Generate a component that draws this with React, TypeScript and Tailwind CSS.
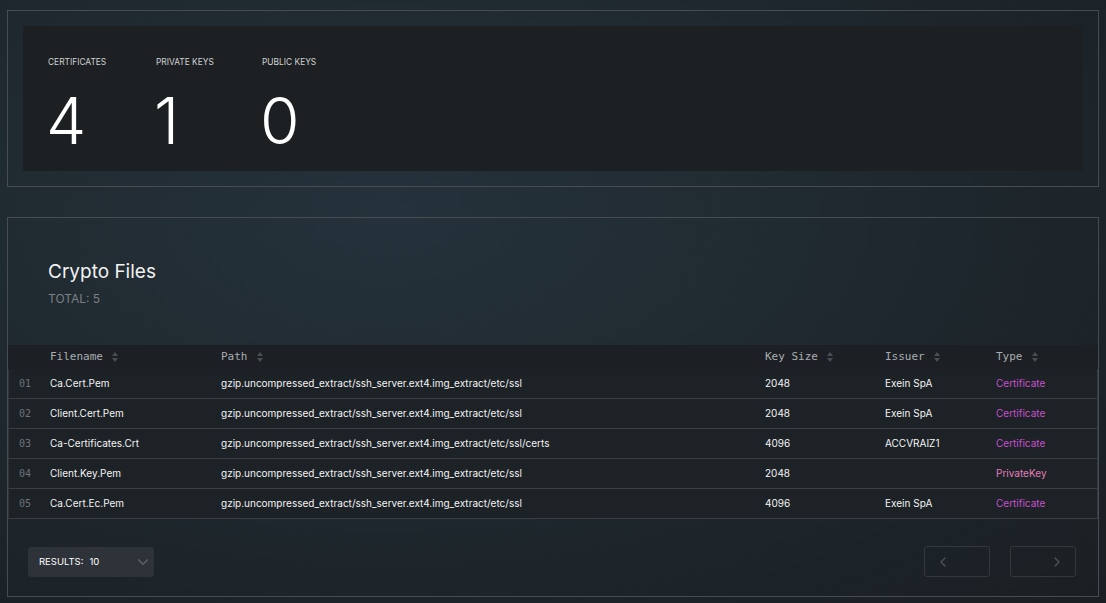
import React from "react";
import { ChevronDown, ChevronLeft, ChevronRight } from "lucide-react";

const stats = [
  { label: "CERTIFICATES", value: "4", w: "w-[108px]" },
  { label: "PRIVATE KEYS", value: "1", w: "w-[106px]" },
  { label: "PUBLIC KEYS", value: "0", w: "w-[106px]" },
];

const rows = [
  { name: "Ca.Cert.Pem", path: "gzip.uncompressed_extract/ssh_server.ext4.img_extract/etc/ssl", size: "2048", issuer: "Exein SpA", type: "Certificate" },
  { name: "Client.Cert.Pem", path: "gzip.uncompressed_extract/ssh_server.ext4.img_extract/etc/ssl", size: "2048", issuer: "Exein SpA", type: "Certificate" },
  { name: "Ca-Certificates.Crt", path: "gzip.uncompressed_extract/ssh_server.ext4.img_extract/etc/ssl/certs", size: "4096", issuer: "ACCVRAIZ1", type: "Certificate" },
  { name: "Client.Key.Pem", path: "gzip.uncompressed_extract/ssh_server.ext4.img_extract/etc/ssl", size: "2048", issuer: "", type: "PrivateKey" },
  { name: "Ca.Cert.Ec.Pem", path: "gzip.uncompressed_extract/ssh_server.ext4.img_extract/etc/ssl", size: "4096", issuer: "Exein SpA", type: "Certificate" },
];

const SortIcon = () => (
  <svg width="6" height="12" viewBox="0 0 6 12" className="ml-[9px]">
    <path d="M3 1 L6 5 L0 5 Z" fill="#4a4f55" />
    <path d="M3 11 L6 7 L0 7 Z" fill="#4a4f55" />
  </svg>
);

const HeaderCell = ({ label, className }: { label: string; className: string }) => (
  <div className={`flex items-center ${className}`}>
    <span>{label}</span>
    <SortIcon />
  </div>
);

export default function App() {
  return (
    <div
      className="w-[1106px] h-[603px] overflow-hidden bg-[radial-gradient(ellipse_at_35%_35%,#25323b_0%,#1e272d_55%,#1a1f23_100%)] pt-[10px] px-[7px] text-white"
      style={{ fontFamily: "Inter, 'Noto Sans', sans-serif" }}
    >
      {/* stats */}
      <div className="h-[177px] border border-[#464c52] p-[15px]">
        <div className="h-[145px] bg-[#1d2023] pl-[25px] pt-[31px] flex">
          {stats.map((s) => (
            <div key={s.label} className={`flex flex-col ${s.w}`}>
              <div className="text-[8.4px] leading-[10px] text-[#d0d2d4]">{s.label}</div>
              <div className="text-[64px] leading-[64px] font-light mt-[22px] -ml-[2px]">{s.value}</div>
            </div>
          ))}
        </div>
      </div>

      {/* crypto files */}
      <div className="mt-[30px] h-[380px] border border-[#464c52] flex flex-col">
        <div className="pl-[40px] pt-[42px] h-[127px]">
          <div className="text-[19px] leading-[24px] text-[#f2f2f2]">Crypto Files</div>
          <div className="text-[12px] leading-[14px] text-[#7c8085] mt-[8px]">TOTAL: 5</div>
        </div>

        <div>
          <div
            className="h-[24px] bg-[#1c2024] flex items-center text-[11px] text-[#a9adb1]"
            style={{ fontFamily: "'DejaVu Sans Mono', monospace" }}
          >
            <div className="w-[42px]" />
            <HeaderCell label="Filename" className="w-[171px]" />
            <HeaderCell label="Path" className="w-[544px]" />
            <HeaderCell label="Key Size" className="w-[120px]" />
            <HeaderCell label="Issuer" className="w-[111px]" />
            <HeaderCell label="Type" className="w-[90px]" />
          </div>
          {rows.map((r, i) => (
            <div
              key={i}
              className="h-[30px] bg-[#1d2227] border-b border-[#3a3e42] border-l border-l-[#2f3438] border-r border-r-[#34393d] flex items-center text-[10px] text-[#f4f4f4]"
            >
              <div
                className="w-[41px] pl-[10px] text-[10px] text-[#6d7277]"
                style={{ fontFamily: "'DejaVu Sans Mono', monospace" }}
              >
                {String(i + 1).padStart(2, "0")}
              </div>
              <div className="w-[171px]">{r.name}</div>
              <div className="w-[544px]">{r.path}</div>
              <div className="w-[120px]">{r.size}</div>
              <div className="w-[111px]">{r.issuer}</div>
              <div className={r.type === "PrivateKey" ? "text-[#e27db8]" : "text-[#c94fce]"}>{r.type}</div>
            </div>
          ))}
        </div>

        <div className="flex items-start justify-between mt-[27px] pl-[20px] pr-[19px]">
          <div className="w-[126px] h-[30px] mt-[1px] rounded-[3px] bg-[#2e3239] flex items-center pl-[11px] pr-[2px] text-[9.5px]">
            <span>RESULTS:</span>
            <span className="ml-[6px]">10</span>
            <ChevronDown className="ml-auto w-[18px] h-[18px] text-[#5d6268]" strokeWidth={2} />
          </div>
          <div className="flex gap-[20px] mr-[3px]">
            <button className="w-[66px] h-[31px] rounded-[3px] border border-[#34383d] flex items-center pl-[10px]">
              <ChevronLeft className="w-[16px] h-[16px] text-[#4d5157]" strokeWidth={2} />
            </button>
            <button className="w-[66px] h-[31px] rounded-[3px] border border-[#34383d] flex items-center justify-end pr-[10px]">
              <ChevronRight className="w-[16px] h-[16px] text-[#4d5157]" strokeWidth={2} />
            </button>
          </div>
        </div>
      </div>
    </div>
  );
}
